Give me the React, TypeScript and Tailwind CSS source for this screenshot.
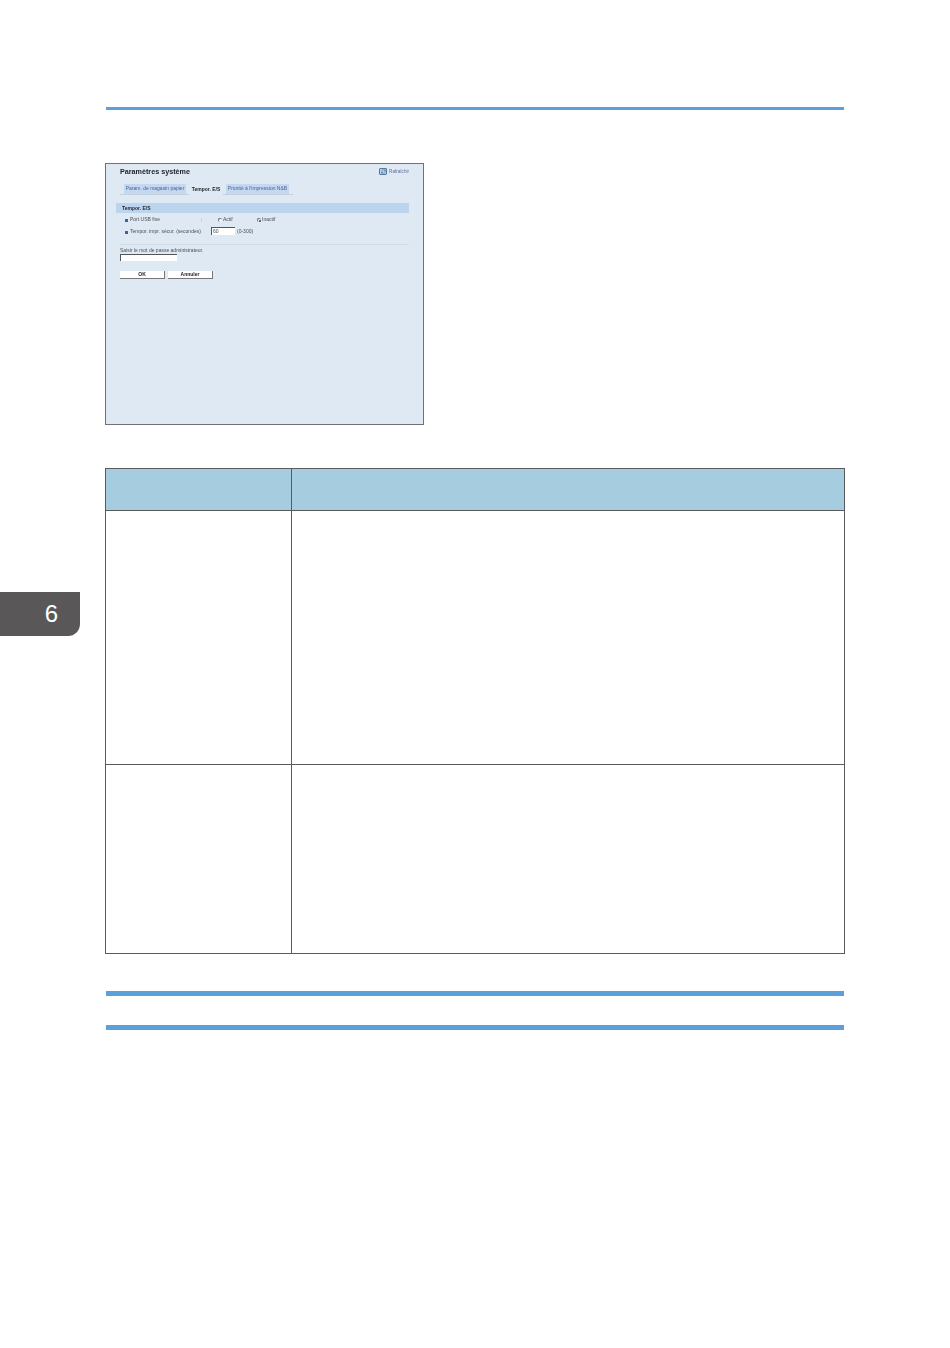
import { RefreshCw } from "lucide-react";

function Radio({ checked, label }: { checked?: boolean; label: string }) {
  return (
    <span className="flex items-center gap-px">
      <span className="flex h-[4px] w-[4px] items-center justify-center rounded-full border-l-[0.5px] border-t-[0.5px] border-gray-500 bg-white">
        {checked && <span className="h-[2px] w-[2px] rounded-full bg-gray-700" />}
      </span>
      {label}
    </span>
  );
}

function SettingsShot() {
  return (
    <div className="ml-[105px] h-[262px] w-[319px] border border-[#6f7378] bg-[#dfe9f3]">
      {/* the reference is a scaled down capture, so the content is a bit soft */}
      <div className="pl-[10px] pr-[14px] pt-[3px] font-['Liberation_Sans',sans-serif] text-[5px] text-[#4a4f57] blur-[0.4px]">
        {/* Title */}
        <div className="flex h-[10px] items-center justify-between pl-[4px]">
          <span className="text-[7.2px] font-bold text-[#22262b]">Paramètres système</span>
          <span className="flex items-center gap-[2px] text-[4.6px] text-[#5a6f9c]">
            <span className="flex h-[7px] w-[8px] items-center justify-center rounded-[1px] border-[0.5px] border-[#55799f] bg-[#b9d2ea]">
              <RefreshCw size={5} strokeWidth={2} className="text-[#33597f]" />
            </span>
            <span className="pt-px">Rafraîchir</span>
          </span>
        </div>

        {/* Tabs */}
        <div className="ml-[4px] mt-[6px] flex h-[12px] w-[173px] gap-[3px] border-b border-[#c4d0dc] pl-[4px]">
          <div className="mt-px flex h-[10px] w-[62px] items-center justify-center bg-[#c4d9f0] text-[#47629c]">Param. de magasin papier</div>
          <div className="mt-px flex h-[11px] w-[34px] items-center justify-center bg-[#dfe9f3] font-bold text-[#22262b]">Tempor. E/S</div>
          <div className="mt-px flex h-[10px] w-[63px] items-center justify-center bg-[#c4d9f0] text-[#47629c]">Priorité à l'impression N&B</div>
        </div>

        {/* Section */}
        <div className="mt-[8px] flex h-[10px] items-center bg-[#bcd5ee] pl-[6px] pt-px font-bold text-[#22262b]">Tempor. E/S</div>
        <div className="mt-[3px] flex h-[8px] items-center pl-[9px]">
          <span className="h-[3px] w-[3px] bg-[#3b62a5]" />
          <span className="ml-[2px] w-[71px]">Port USB fixe</span>
          <span className="w-[17px]">:</span>
          <span className="w-[39px]">
            <Radio label="Actif" />
          </span>
          <Radio checked label="Inactif" />
        </div>
        <div className="mt-[3px] flex h-[10px] items-center pl-[9px]">
          <span className="h-[3px] w-[3px] bg-[#3b62a5]" />
          <span className="ml-[2px] w-[81px] whitespace-nowrap">Tempor. impr. sécur. (secondes)</span>
          <span className="mb-[2px] flex h-[8px] w-[24px] items-center border-l-[0.5px] border-t-[0.5px] border-gray-600 bg-white pl-[1px]">60</span>
          <span className="ml-[2px]">(0-300)</span>
        </div>

        <div className="ml-[4px] mt-[7px] h-px bg-[#d3dde8]" />

        {/* Password */}
        <div className="ml-[4px] mt-[2px] h-[7px] leading-[7px]">Saisir le mot de passe administrateur.</div>
        <div className="ml-[4px] h-[7px] w-[57px] border-l border-t border-[#555] bg-white" />

        <div className="ml-[4px] mt-[10px] flex gap-[3px] font-bold text-[#22262b]">
          <div className="flex h-[8px] w-[45px] items-center justify-center border-b border-r border-[#777] bg-white">OK</div>
          <div className="flex h-[8px] w-[45px] items-center justify-center border-b border-r border-[#777] bg-white">Annuler</div>
        </div>
      </div>
    </div>
  );
}

export default function App() {
  return (
    <div className="relative h-[1348px] w-[950px] bg-white pt-[107px]">
      <div className="ml-[106px] h-[3px] w-[738px] bg-[#5b9fdb]" />

      <div className="mt-[53px]">
        <SettingsShot />
      </div>

      {/* Table */}
      <div className="ml-[105px] mt-[43px] w-[740px] border border-[#5a5a5a]">
        <div className="flex h-[42px] border-b border-[#5a5a5a] bg-[#a6cddf]">
          <div className="w-[186px] border-r border-[#5a5a5a]" />
          <div className="flex-1" />
        </div>
        <div className="flex h-[254px] border-b border-[#5a5a5a]">
          <div className="w-[186px] border-r border-[#5a5a5a]" />
          <div className="flex-1" />
        </div>
        <div className="flex h-[188px]">
          <div className="w-[186px] border-r border-[#5a5a5a]" />
          <div className="flex-1" />
        </div>
      </div>

      <div className="ml-[106px] mt-[37px] h-[5px] w-[738px] bg-[#5b9fdb]" />
      <div className="ml-[106px] mt-[29px] h-[5px] w-[738px] bg-[#5b9fdb]" />

      {/* Chapter tab on the page edge */}
      <div className="absolute left-0 top-[592px] flex h-[44px] w-[80px] items-center justify-end rounded-br-[12px] bg-[#595757] pr-[22px] font-['Liberation_Sans',sans-serif] text-[24px] text-white">
        6
      </div>
    </div>
  );
}
